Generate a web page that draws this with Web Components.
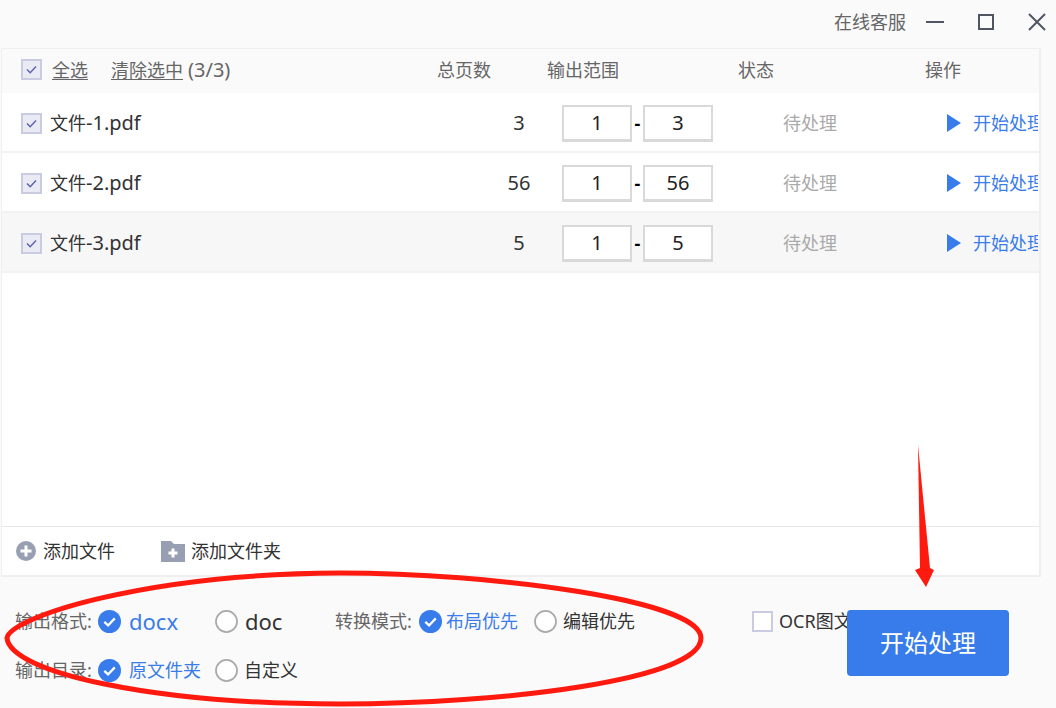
<!DOCTYPE html>
<html lang="zh">
<head>
<meta charset="utf-8">
<title>PDF</title>
<style>
  html, body { margin: 0; padding: 0; }
  body {
    width: 1056px;
    height: 708px;
    overflow: hidden;
    background: #fafafa;
    font-family: "Noto Sans", "Noto Sans CJK SC", sans-serif;
    font-size: 18px;
    color: #333;
  }
</style>
</head>
<body>
<app-window></app-window>

<script>
class CheckMark extends HTMLElement {
  constructor() {
    super();
    this.attachShadow({ mode: "open" });
  }

  connectedCallback() {
    const on = this.hasAttribute("checked");
    this.shadowRoot.innerHTML = /* html */`
    <style>
      :host { display: block; width: 21px; height: 21px; flex: none; }
      .box {
        box-sizing: border-box;
        width: 21px;
        height: 21px;
        border: 2px solid #c9cce0;
        background: ${on ? "#e9eaf4" : "#fff"};
      }
      svg { display: block; width: 17px; height: 17px; }
    </style>
    <div class="box">
      ${on ? `<svg viewBox="0 0 17 17"><path d="M4 8.5l3.2 3.2L13 5.6" fill="none" stroke="#5c60ac" stroke-width="1.4"/></svg>` : ""}
    </div>`;
  }
}

class RadioOption extends HTMLElement {
  constructor() {
    super();
    this.attachShadow({ mode: "open" });
  }

  connectedCallback() {
    const on = this.hasAttribute("checked");
    const gap = this.getAttribute("gap") || "8";
    this.shadowRoot.innerHTML = /* html */`
    <style>
      :host {
        display: flex;
        align-items: center;
        gap: ${gap}px;
        color: ${on ? "#3a7cea" : "#333"};
        white-space: nowrap;
      }
      svg { display: block; width: 23px; height: 23px; flex: none; }
    </style>
    ${on
      ? `<svg viewBox="0 0 24 24"><circle cx="12" cy="12" r="12" fill="#377cea"/><path d="M6.6 12.4l3.9 3.7 7-7.4" fill="none" stroke="#fff" stroke-width="2.4"/></svg>`
      : `<svg viewBox="0 0 24 24"><circle cx="12" cy="12" r="11" fill="#fff" stroke="#a9a9a9" stroke-width="1.8"/></svg>`}
    <slot></slot>`;
  }
}

class TitleBar extends HTMLElement {
  constructor() {
    super();
    this.attachShadow({ mode: "open" });
  }

  connectedCallback() {
    this.shadowRoot.innerHTML = /* html */`
    <style>
      :host {
        display: flex;
        justify-content: flex-end;
        align-items: center;
        height: 48px;
        padding: 0 9px 4px 0;
        box-sizing: border-box;
        color: #666;
      }
      .svc { margin-right: 19px; line-height: 26px; }
      svg { display: block; stroke: #4f5563; fill: none; }
    </style>
    <span class="svc">在线客服</span>
    <svg width="20" height="20" viewBox="0 0 20 20" stroke-width="2" style="margin-right:32px"><path d="M1 10h18"/></svg>
    <svg width="18" height="18" viewBox="0 0 18 18" stroke-width="2" style="margin-right:32px"><rect x="2" y="2" width="14" height="14"/></svg>
    <svg width="20" height="20" viewBox="0 0 20 20" stroke-width="2"><path d="M2 2l16 16M18 2L2 18"/></svg>`;
  }
}

const COLS = "435px 110px 191px 187px 113px";

class TableHead extends HTMLElement {
  constructor() {
    super();
    this.attachShadow({ mode: "open" });
  }

  connectedCallback() {
    this.shadowRoot.innerHTML = /* html */`
    <style>
      :host {
        display: grid;
        grid-template-columns: ${COLS};
        align-items: center;
        box-sizing: border-box;
        height: 44px;
        padding-bottom: 3px;
        background: #fafafa;
        color: #666;
      }
      .sel { display: flex; align-items: center; padding-left: 19px; }
      a { color: #666; text-decoration: underline; text-underline-offset: 2px; }
      .all { margin-left: 10px; }
      .clear { margin-left: 23px; }
      .count { margin-left: 5px; font-size: 20px; }
    </style>
    <div class="sel">
      <check-mark checked></check-mark>
      <a class="all">全选</a>
      <a class="clear">清除选中</a>
      <span class="count">(3/3)</span>
    </div>
    <div>总页数</div>
    <div>输出范围</div>
    <div>状态</div>
    <div>操作</div>`;
  }
}

class FileRow extends HTMLElement {
  constructor() {
    super();
    this.attachShadow({ mode: "open" });
  }

  connectedCallback() {
    const num = this.getAttribute("num");
    const pages = this.getAttribute("pages");
    this.shadowRoot.innerHTML = /* html */`
    <style>
      :host {
        display: grid;
        grid-template-columns: ${COLS};
        align-items: center;
        height: 60px;
        box-sizing: border-box;
        padding-top: 2px;
        border-bottom: 2px solid #f2f2f2;
        background: ${this.hasAttribute("hover") ? "#f7f7f7" : "#fff"};
      }
      .name { display: flex; align-items: center; gap: 8px; padding-left: 19px; }
      .latin { font-size: 20px; }
      .pages { padding-left: 54px; text-align: center; font-size: 20px; }
      .range { display: flex; align-items: center; padding-left: 15px; }
      .input {
        box-sizing: border-box;
        width: 70px;
        height: 37px;
        line-height: 32px;
        border: 2px solid #d9d9d9;
        border-bottom-width: 3px;
        background: #fff;
        color: #222;
        font-size: 20px;
        text-align: center;
      }
      .dash { width: 11px; text-align: center; color: #000; font-weight: 700; }
      .status { padding-left: 45px; color: #aaa; }
      .action {
        display: flex;
        align-items: center;
        gap: 12px;
        padding-left: 22px;
        color: #3a7cea;
        overflow: hidden;
        white-space: nowrap;
      }
      svg { display: block; flex: none; }
    </style>
    <div class="name"><check-mark checked></check-mark><span>文件<span class="latin">-${num}.pdf</span></span></div>
    <div class="pages">${pages}</div>
    <div class="range">
      <div class="input">1</div>
      <div class="dash">-</div>
      <div class="input">${pages}</div>
    </div>
    <div class="status">待处理</div>
    <div class="action">
      <svg width="14" height="18" viewBox="0 0 14 18"><path d="M0 0l14 9L0 18z" fill="#377cea"/></svg>
      <span>开始处理</span>
    </div>`;
  }
}

class FileTable extends HTMLElement {
  constructor() {
    super();
    this.attachShadow({ mode: "open" });
  }

  connectedCallback() {
    this.shadowRoot.innerHTML = /* html */`
    <style>
      :host {
        display: flex;
        flex-direction: column;
        box-sizing: border-box;
        width: 1040px;
        height: 529px;
        margin-left: 1px;
        border: 2px solid #efefef;
        border-top-width: 1px;
        border-left-width: 1px;
        background: #fff;
      }
      .list { flex: 1; }
      .foot {
        display: flex;
        align-items: center;
        height: 49px;
        box-sizing: border-box;
        border-top: 1px solid #e8e8e8;
      }
      .add { display: flex; align-items: center; gap: 7px; }
      .file { margin-left: 14px; }
      .folder { margin-left: 46px; gap: 6px; }
      svg { display: block; flex: none; }
    </style>
    <table-head></table-head>
    <div class="list">
      <file-row num="1" pages="3"></file-row>
      <file-row num="2" pages="56"></file-row>
      <file-row num="3" pages="5" hover></file-row>
    </div>
    <div class="foot">
      <div class="add file">
        <svg width="20" height="20" viewBox="0 0 20 20"><circle cx="10" cy="10" r="10" fill="#989fb2"/><path d="M10 4.5v11M4.5 10h11" stroke="#fff" stroke-width="3"/></svg>
        <span>添加文件</span>
      </div>
      <div class="add folder">
        <svg width="24" height="21" viewBox="0 0 24 21"><path d="M0 0h10l3 3h11v18H0z" fill="#989fb2"/><path d="M12 7.5v9M7.5 12h9" stroke="#fff" stroke-width="3"/></svg>
        <span>添加文件夹</span>
      </div>
    </div>`;
  }
}

class OptionsBar extends HTMLElement {
  constructor() {
    super();
    this.attachShadow({ mode: "open" });
  }

  connectedCallback() {
    this.shadowRoot.innerHTML = /* html */`
    <style>
      :host {
        display: flex;
        align-items: flex-start;
        box-sizing: border-box;
        padding: 20px 0 0 15px;
        height: 131px;
      }
      .grid {
        display: grid;
        grid-template-columns: 83px 117px 120px 84px 115px 218px;
        grid-auto-rows: 48px;
        row-gap: 1px;
        align-items: center;
      }
      .label { color: #666; white-space: nowrap; }
      .en { font-size: 22px; }
      .ocr {
        display: flex;
        align-items: center;
        gap: 6px;
        width: 95px;
        height: 48px;
        overflow: hidden;
        white-space: nowrap;
      }
      .go {
        width: 162px;
        height: 66px;
        margin-top: 13px;
        border-radius: 4px;
        background: #377cea;
        color: #fff;
        font-size: 24px;
        line-height: 66px;
        text-align: center;
      }
    </style>
    <div class="grid">
      <div class="label">输出格式:</div>
      <radio-option checked><span class="en">docx</span></radio-option>
      <radio-option gap="7"><span class="en">doc</span></radio-option>
      <div class="label">转换模式:</div>
      <radio-option checked gap="4">布局优先</radio-option>
      <radio-option gap="6">编辑优先</radio-option>

      <div class="label">输出目录:</div>
      <radio-option checked>原文件夹</radio-option>
      <radio-option gap="6">自定义</radio-option>
    </div>
    <div class="ocr"><check-mark></check-mark><span>OCR图文</span></div>
    <div class="go">开始处理</div>`;
  }
}

class RedMarks extends HTMLElement {
  constructor() {
    super();
    this.attachShadow({ mode: "open" });
  }

  connectedCallback() {
    this.shadowRoot.innerHTML = /* html */`
    <style>
      :host { position: absolute; inset: 0; pointer-events: none; }
      svg { display: block; }
    </style>
    <svg width="1056" height="708" viewBox="0 0 1056 708">
      <path d="M7 638C10 618 140 574 340 573C490 573 701 600 701 638C701 680 500 704 340 704C150 704 10 672 7 638Z" fill="none" stroke="#ff1a10" stroke-width="5"/>
      <path d="M918 445L920 568L915 570L926 587L934 570L930 568Z" fill="#ff1a10"/>
    </svg>`;
  }
}

class AppWindow extends HTMLElement {
  constructor() {
    super();
    this.attachShadow({ mode: "open" });
  }

  connectedCallback() {
    this.shadowRoot.innerHTML = /* html */`
    <style>
      :host {
        display: block;
        position: relative;
        width: 1056px;
        height: 708px;
        overflow: hidden;
        line-height: 26px;
      }
    </style>
    <title-bar></title-bar>
    <file-table></file-table>
    <options-bar></options-bar>
    <red-marks></red-marks>`;
  }
}

customElements.define("check-mark", CheckMark);
customElements.define("radio-option", RadioOption);
customElements.define("title-bar", TitleBar);
customElements.define("table-head", TableHead);
customElements.define("file-row", FileRow);
customElements.define("file-table", FileTable);
customElements.define("options-bar", OptionsBar);
customElements.define("red-marks", RedMarks);
customElements.define("app-window", AppWindow);
</script>
</body>
</html>
